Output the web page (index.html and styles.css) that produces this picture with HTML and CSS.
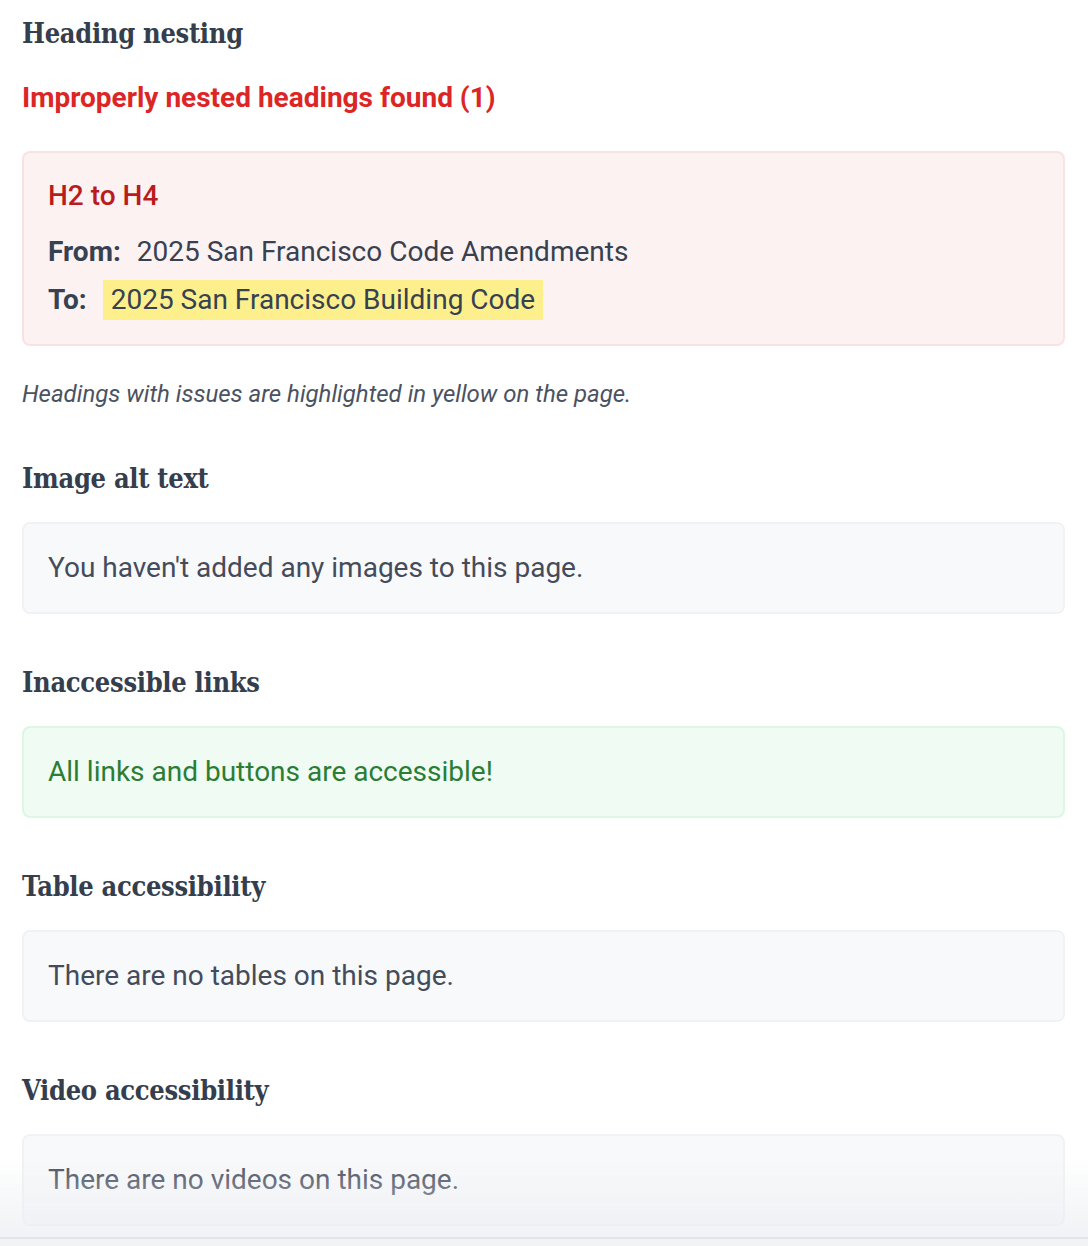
FILE: index.html
```html
<!DOCTYPE html>
<html lang="en">
<head>
<meta charset="utf-8">
<title>Accessibility checks</title>
<link rel="stylesheet" href="styles.css">
</head>
<body>
<main class="panel">
  <section class="section">
    <h3 class="section-title">Heading nesting</h3>
    <p class="issue-count">Improperly nested headings found (1)</p>
    <div class="box box-error">
      <p class="issue-title">H2 to H4</p>
      <div class="issue-row"><span class="issue-label">From:</span><span class="issue-value">2025 San Francisco Code Amendments</span></div>
      <div class="issue-row"><span class="issue-label">To:</span><span class="issue-value highlight">2025 San Francisco Building Code</span></div>
    </div>
    <p class="note">Headings with issues are highlighted in yellow on the page.</p>
  </section>

  <section class="section">
    <h3 class="section-title">Image alt text</h3>
    <div class="box box-neutral">You haven't added any images to this page.</div>
  </section>

  <section class="section">
    <h3 class="section-title">Inaccessible links</h3>
    <div class="box box-success">All links and buttons are accessible!</div>
  </section>

  <section class="section">
    <h3 class="section-title">Table accessibility</h3>
    <div class="box box-neutral">There are no tables on this page.</div>
  </section>

  <section class="section">
    <h3 class="section-title">Video accessibility</h3>
    <div class="box box-neutral">There are no videos on this page.</div>
  </section>
</main>
<div class="footer-fade"></div>
</body>
</html>
```

FILE: styles.css
```css
html, body {
  margin: 0;
  padding: 0;
  background: #ffffff;
}

body {
  font-family: Roboto, "Liberation Sans", sans-serif;
  color: #3b4350;
}

.panel {
  padding: 16px 23px 0 22px;
}

.section {
  display: flex;
  flex-direction: column;
  margin-bottom: 51px;
}

.section:last-child {
  margin-bottom: 0;
}

.section-title {
  margin: 0 0 25px;
  font-family: "DejaVu Serif Condensed", "DejaVu Serif", serif;
  font-stretch: condensed;
  font-weight: 700;
  font-size: 27px;
  line-height: 36px;
  color: #353e4d;
  letter-spacing: -0.3px;
}

.issue-count {
  margin: 3px 0 35px;
  font-size: 28px;
  line-height: 36px;
  font-weight: 700;
  color: #dc2626;
}

.box {
  border: 2px solid;
  border-radius: 8px;
  padding: 25px 24px 26px;
  font-size: 28px;
  line-height: 37px;
}

.box-error {
  background: #fcf2f2;
  border-color: #fbe2e2;
  padding: 25px 24px 24px;
}

.box-neutral {
  background: #f8f9fb;
  border-color: #f1f2f5;
  color: #444c5c;
}

.box-success {
  background: #f0fbf3;
  border-color: #def7e5;
  color: #2b7d34;
}

.issue-title {
  margin: 0 0 18px;
  font-size: 28px;
  line-height: 36px;
  font-weight: 500;
  color: #b91c1c;
}

.issue-row {
  display: flex;
  align-items: center;
  gap: 16px;
  color: #374151;
  line-height: 40px;
  margin-top: 8px;
}

.issue-label {
  font-weight: 700;
}

.highlight {
  background: #fdf08c;
  padding: 0 8px;
}

.note {
  margin: 32px 0 0;
  font-style: italic;
  font-size: 24px;
  line-height: 32px;
  color: #4b5261;
}

.footer-fade {
  position: fixed;
  left: 0;
  right: 0;
  bottom: 0;
  height: 7px;
  background: #f2f3f5;
  border-top: 2px solid #e1e4e9;
  pointer-events: none;
}

.footer-fade::before {
  content: "";
  position: absolute;
  left: 0;
  right: 0;
  bottom: 9px;
  height: 80px;
  background: linear-gradient(to bottom, rgba(240, 242, 245, 0), rgba(236, 238, 242, 0.75));
}
```
